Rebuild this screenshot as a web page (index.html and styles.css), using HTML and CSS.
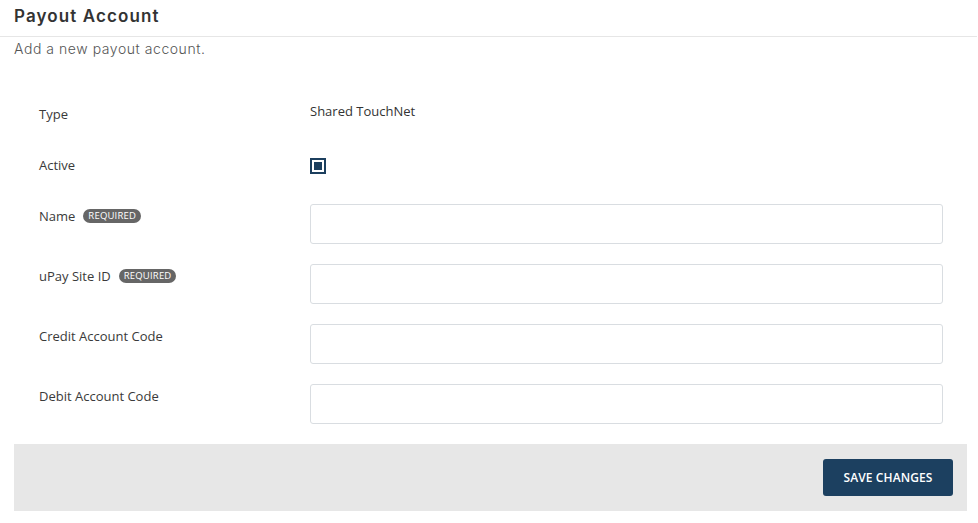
FILE: index.html
```html
<!DOCTYPE html>
<html>
<head>
<meta charset="utf-8">
<link rel="stylesheet" href="styles.css">
</head>
<body>
<div class="header"><h1 class="title">Payout Account</h1></div>
<p class="subtitle">Add a new payout account.</p>
<div class="panel">
  <form class="form">
    <div class="row row-type">
      <div class="label">Type</div>
      <div class="value">Shared TouchNet</div>
    </div>
    <div class="row row-active">
      <div class="label">Active</div>
      <div class="value"><span class="checkbox"><span class="check-fill"></span></span></div>
    </div>
    <div class="row row-input">
      <div class="label">Name <span class="badge">REQUIRED</span></div>
      <div class="value"><input class="input" type="text"></div>
    </div>
    <div class="row row-input">
      <div class="label">uPay Site ID <span class="badge">REQUIRED</span></div>
      <div class="value"><input class="input" type="text"></div>
    </div>
    <div class="row row-input">
      <div class="label">Credit Account Code</div>
      <div class="value"><input class="input" type="text"></div>
    </div>
    <div class="row row-input">
      <div class="label">Debit Account Code</div>
      <div class="value"><input class="input" type="text"></div>
    </div>
  </form>
  <div class="footer"><button class="btn" type="button">SAVE CHANGES</button></div>
</div>
</body>
</html>
```
FILE: styles.css
```css
* { box-sizing: border-box; }
html, body { margin: 0; padding: 0; background: #fff; }
body { font-family: "Open Sans", "Liberation Sans", sans-serif; color: #333; }
.header {
  height: 37px;
  border-bottom: 1px solid #e6e6e6;
  margin-right: 1px;
  padding: 4px 14px 0;
}
.title {
  margin: 0;
  font-family: "Inter", "Open Sans", sans-serif;
  font-weight: 600;
  font-size: 17px;
  line-height: 24px;
  color: #333;
  letter-spacing: 1.1px;
}
.subtitle {
  margin: 2px 0 0;
  padding: 0 14px;
  font-family: "Inter", "Open Sans", sans-serif;
  font-weight: 300;
  font-size: 14px;
  line-height: 20px;
  color: #555;
  letter-spacing: 0.55px;
}
.panel { margin: 0 11px 0 14px; }
.form { padding: 43px 24px 0 25px; display: flex; flex-direction: column; }
.row { display: flex; align-items: flex-start; }
.label {
  width: 271px;
  flex: none;
  font-size: 13px;
  line-height: 18px;
  color: #3a3a3a;
  display: flex;
  align-items: center;
}
.value { flex: 1; font-size: 13px; line-height: 18px; color: #333; }
.row-type .label { padding-top: 3px; }
.row-active { margin-top: 33px; }
.row-input { margin-top: 20px; }
.row-active + .row-input { margin-top: 30px; }
.row-input .label { padding-top: 3px; }
.checkbox {
  display: block;
  width: 16px; height: 16px;
  margin-top: 2px;
  border: 2px solid #1c3f5e;
  padding: 2px;
  background: #fff;
}
.check-fill { display: block; width: 100%; height: 100%; background: #1c3f5e; }
.badge {
  display: inline-block;
  margin-left: 8px;
  background: #666;
  color: #fff;
  font-size: 9.5px;
  line-height: 14px;
  height: 14px;
  padding: 0 5px;
  border-radius: 7px;
  letter-spacing: 0.2px;
}
.input {
  display: block;
  width: 100%;
  height: 40px;
  border: 1px solid #d9dde1;
  border-radius: 3px;
  background: #fff;
  font: inherit;
  padding: 0 10px;
}
.footer {
  margin-top: 20px;
  height: 67px;
  background: #e7e7e7;
  display: flex;
  justify-content: flex-end;
  align-items: flex-start;
  padding: 15px 14px 0;
}
.btn {
  width: 130px;
  height: 37px;
  background: #1c4060;
  color: #fff;
  border: none;
  border-radius: 3px;
  font-family: "Open Sans", sans-serif;
  font-weight: 600;
  font-size: 12px;
  letter-spacing: 0.1px;
}
```
